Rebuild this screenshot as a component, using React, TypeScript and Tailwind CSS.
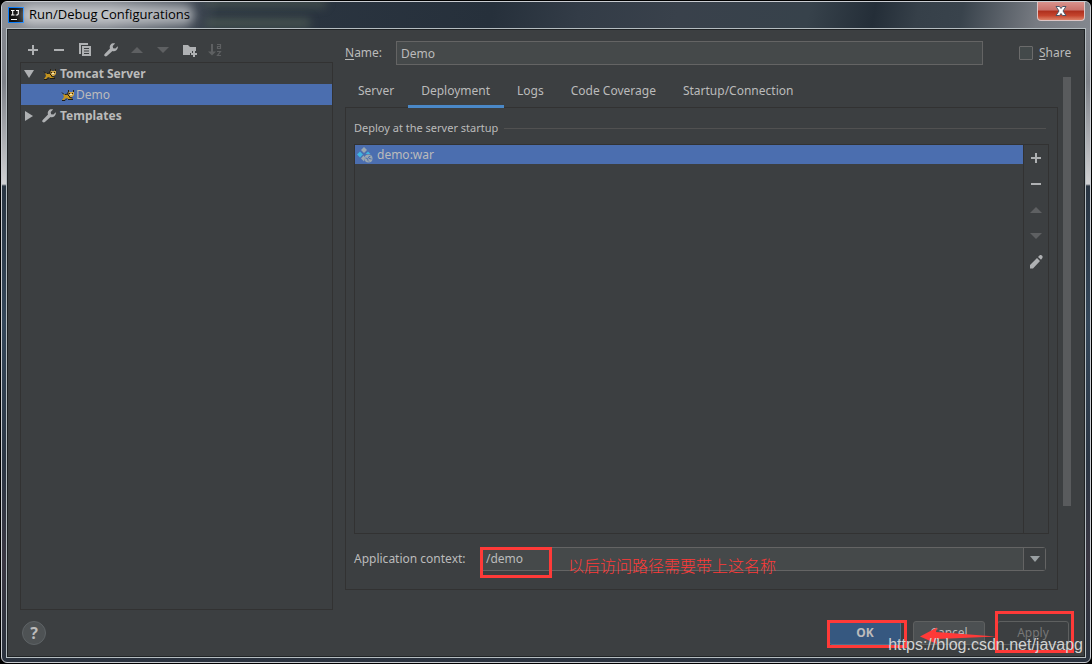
import React, { useState } from 'react';

const tabs = ['Server', 'Deployment', 'Logs', 'Code Coverage', 'Startup/Connection'];

function AddIcon() {
  return (
    <svg className="w-4 h-4" viewBox="0 0 16 16" fill="#afb1b3">
      <path d="M7 3h2v4h4v2H9v4H7V9H3V7h4z" />
    </svg>
  );
}

function RemoveIcon() {
  return (
    <svg className="w-4 h-4" viewBox="0 0 16 16" fill="#afb1b3">
      <path d="M3 7h10v2H3z" />
    </svg>
  );
}

function CopyIcon() {
  return (
    <svg className="w-4 h-4" viewBox="0 0 16 16">
      <path d="M2 1h9v2H4v9H2z" fill="#afb1b3" />
      <path d="M5 4h9v10H5zM7 6v1h5V6zM7 8.5v1h5v-1zM7 11v1h5v-1z" fill="#afb1b3" fillRule="evenodd" />
    </svg>
  );
}

function WrenchIcon() {
  return (
    <svg className="w-4 h-4 shrink-0" viewBox="0 0 16 16" fill="#afb1b3">
      <path d="M14.8 4.200 12.400 6.600 10.100 6.200 9.700 4 12.100 1.600C10.400 1 8.600 1.400 7.600 2.700 6.700 3.800 6.500 5.200 7 6.500L1.700 11.900c-.6.7-.6 1.600 0 2.200s1.600.600 2.200 0l5.600-5.100c1.300.5 2.800.2 3.900-.8 1.200-1.100 1.700-2.600 1.400-4z" />
    </svg>
  );
}

function UpIcon() {
  return (
    <svg className="w-4 h-4" viewBox="0 0 16 16" fill="#5e6062">
      <path d="M8 5l6 6H2z" />
    </svg>
  );
}

function DownIcon() {
  return (
    <svg className="w-4 h-4" viewBox="0 0 16 16" fill="#5e6062">
      <path d="M2 5h12l-6 6z" />
    </svg>
  );
}

function FolderIcon() {
  return (
    <svg className="w-4 h-4" viewBox="0 0 16 16" fill="#afb1b3">
      <path d="M2 3h5l2 2h6v4h-4v2H9v2H2z" />
      <path d="M12 9h2v2h2v2h-2v2h-2v-2h-2v-2h2z" />
    </svg>
  );
}

function SortIcon() {
  return (
    <svg className="w-4 h-4" viewBox="0 0 16 16" fill="none" stroke="#5e6062">
      <path d="M5 2v9" strokeWidth="2" />
      <path d="M1 9.500h8l-4 4z" fill="#5e6062" stroke="none" />
      <path d="M10 2.500h3.500v4h-3v-2h3M10 9.500h3.500l-3 4h3.500" strokeWidth="1.200" />
    </svg>
  );
}

function PencilIcon() {
  return (
    <svg className="w-4 h-4" viewBox="0 0 16 16" fill="#afb1b3">
      <path d="M2 11l7-7 3 3-7 7.500H2zM10 3l1.500-1.500c.7-.7 1.800-.6 2.500.1.800.8.9 1.900.2 2.600L13 5.800z" />
    </svg>
  );
}

function TomcatIcon() {
  return (
    <svg className="w-3.5 h-3.5 shrink-0" viewBox="0 0 14 14">
      <path d="M2 6l3 .5L8 6l1 3 2 1v1H7L5 10l-2 2H1l2-3z" fill="#c4941e" />
      <path d="M7 3l2 1h2l2-1v4l-2 2H9L7 7z" fill="#d0a648" />
      <path d="M1 4.500l2 2M4 6.500l3-.5M1 12.500h3l2-2M7 11.500h5M8.500 9.500l3 .5M7 4v3l2 2" stroke="#1f1b12" fill="none" />
      <path d="M7 2h1v2H7zM12 2h1v2h-1zM8 5h1v1H8zM11 5h1v1h-1z" fill="#2a2110" />
      <path d="M9 6h2v1H9z" fill="#f7ecc8" />
    </svg>
  );
}

function ArtifactIcon() {
  return (
    <svg className="w-4 h-4 shrink-0" viewBox="0 0 16 16">
      <path d="M7 0l3 3-3 3-3-3z" fill="#9aa7b0" />
      <path d="M3 4.500l3 3-3 3-3-3z" fill="#40b6e0" />
      <path d="M11 4.500l2.500 2.500h-5z" fill="#40b6e0" />
      <path d="M6.500 8.500l1.500 2-1 4-3-3z" fill="#9aa7b0" />
      <circle cx="11.500" cy="11.500" r="4" fill="#9aa7b0" />
      <path d="M8.500 11l2 .5.500 2 1 1M13.500 9l-2 1 .5 1.500 2.500.5" stroke="#4b6eaf" fill="none" />
    </svg>
  );
}

function TitleBar() {
  return (
    <header className="relative h-[26px] -mx-1 pl-1.5 flex items-center overflow-hidden bg-[linear-gradient(100deg,#8b8f96_0%,#7d828a_10%,#4a525d_17%,#2c3642_20%,#26303b_45%,#333c47_53%,#39414b_62%,#37424b_74%,#242e38_80%,#364049_84%,#39434c_88%,#777b82_95%,#83878e_100%)] rounded-t-[5px]">
      <span className="absolute left-[204px] -top-1 w-[120px] h-2.5 bg-[#66755f]/35 blur-[4px]" />
      <span className="absolute left-[204px] top-4 w-[104px] h-2.5 bg-[#66755f]/45 blur-[4px]" />
      <svg className="w-4 h-4 shrink-0" viewBox="0 0 16 16">
        <path d="M0 0h16v16H0z" fill="#087cfa" />
        <path d="M1 1h14v14H1z" fill="#111" />
        <path d="M3 3.500h3.500M4.700 3v5M3 8h3.500M8 3.500h3M10.300 3v4l-1 1H7.700" stroke="#fff" fill="none" strokeWidth="1.100" />
        <path d="M3 12h6v1H3z" fill="#fff" />
      </svg>
      <h1 className="relative ml-[5px] text-[13px] text-black font-['Open_Sans',sans-serif]">
        <span className="absolute -left-2 -right-1 -inset-y-px rounded-full bg-white/50 blur-[5px]" />
        <span className="relative">Run/Debug Configurations</span>
      </h1>
      <button
        aria-label="Close"
        className="absolute top-0 right-[5px] w-12 h-[19px] flex items-center justify-center border border-t-0 border-[#dcc5c5] rounded-b-[4px] bg-[linear-gradient(#d9928c_0%,#c9716a_45%,#ae2f1d_50%,#c4442d_75%,#dd8268_100%)]"
      >
        <svg className="w-3 h-3" viewBox="0 0 12 12">
          <path d="M1 1.500h3.500L6 3.500l1.500-2H11L8 6l3 4.500H7.500L6 8.500l-1.500 2H1L4 6z" fill="#fff" stroke="#4d5566" />
        </svg>
      </button>
    </header>
  );
}

function ConfigTree() {
  return (
    <aside className="w-[325px] shrink-0 pl-3 pt-3 flex flex-col">
      <div className="flex gap-2.5 px-[5px] pb-1">
        <button aria-label="Add"><AddIcon /></button>
        <button aria-label="Remove"><RemoveIcon /></button>
        <button aria-label="Copy"><CopyIcon /></button>
        <button aria-label="Edit templates"><WrenchIcon /></button>
        <button aria-label="Move up" disabled><UpIcon /></button>
        <button aria-label="Move down" disabled><DownIcon /></button>
        <button aria-label="New folder"><FolderIcon /></button>
        <button aria-label="Sort" disabled><SortIcon /></button>
      </div>
      <ul className="flex-1 border border-[#323232] leading-[21px]">
        <li className="h-[21px] flex items-center font-bold">
          <svg className="w-4 h-4 shrink-0" viewBox="0 0 16 16" fill="#afb1b3">
            <path d="M3 4h10l-5 8z" />
          </svg>
          <span className="ml-1.5 mr-[3px]"><TomcatIcon /></span>
          Tomcat Server
        </li>
        <li className="h-[21px] flex items-center bg-[#4b6eaf] pl-10">
          <TomcatIcon />
          <span className="ml-px">Demo</span>
        </li>
        <li className="h-[21px] flex items-center font-bold">
          <svg className="w-4 h-4 shrink-0" viewBox="0 0 16 16" fill="#afb1b3">
            <path d="M4 3l8 5-8 5z" />
          </svg>
          <span className="ml-1 mr-[3px]"><WrenchIcon /></span>
          Templates
        </li>
      </ul>
    </aside>
  );
}

function DeploymentPanel() {
  const [context, setContext] = useState('/demo');

  return (
    <div className="flex-1 -mt-px border border-[#323232] pl-2 pr-2 pt-2.5 pb-[18px] flex flex-col">
      <div className="flex items-center gap-1.5 mr-[3px] text-[11px] leading-5">
        <h2>Deploy at the server startup</h2>
        <span className="flex-1 h-px bg-[#515151]" />
      </div>

      <div className="flex-1 mt-1.5 flex border border-[#323232]">
        <ul className="flex-1">
          <li className="h-[19px] flex items-center gap-1 pl-0.5 bg-[#4b6eaf]">
            <ArtifactIcon />
            demo:war
          </li>
        </ul>
        <div className="w-[25px] border-l border-[#323232] pt-[5px] flex flex-col items-center gap-2.5">
          <button aria-label="Add artifact"><AddIcon /></button>
          <button aria-label="Remove artifact"><RemoveIcon /></button>
          <button aria-label="Move artifact up" disabled><UpIcon /></button>
          <button aria-label="Move artifact down" disabled><DownIcon /></button>
          <button aria-label="Edit artifact"><PencilIcon /></button>
        </div>
      </div>

      <div className="mt-[13px] mr-[3px] flex items-center">
        <label htmlFor="context" className="w-[127px]">Application context:</label>
        <div className="relative flex-1 h-6 flex border border-[#646464] rounded-r-[3px] bg-[#45494a]">
          <input
            id="context"
            value={context}
            onChange={(e) => setContext(e.target.value)}
            className="flex-1 min-w-0 pl-1 bg-transparent outline-none"
          />
          <button aria-label="Show contexts" className="w-[22px] border-l border-[#646464] bg-[#3c3f41] flex items-center justify-center">
            <svg className="w-2.5 h-1.5" viewBox="0 0 10 6" fill="#9aa0a3">
              <path d="M0 0h10L5 6z" />
            </svg>
          </button>
          <span className="absolute -left-0.5 -top-px w-[72px] h-[31px] border-[3px] border-[#ff3a38] pointer-events-none" />
          <span className="absolute left-[86px] top-[7px] text-base leading-5 font-light text-[#ff3a38] font-['Noto_Sans_CJK_SC',sans-serif] pointer-events-none">
            以后访问路径需要带上这名称
          </span>
        </div>
      </div>
    </div>
  );
}

function Footer() {
  return (
    <footer className="relative flex items-center gap-3 pl-3.5 pr-[15px] py-[11px]">
      <button
        aria-label="Help"
        className="w-6 h-6 mr-auto rounded-full border border-[#5e6366] bg-[#4e5254] text-base leading-5 font-bold text-[#bbbbbb]"
      >
        ?
      </button>
      <div className="relative">
        <button className="w-[72px] h-6 bg-[#365880] border border-[#4c708c] rounded-[3px] font-bold leading-[22px]">OK</button>
        <span className="absolute -left-0.5 -top-px w-20 h-7 border-[3px] border-[#ff3a38] pointer-events-none" />
      </div>
      <div className="relative">
        <button className="w-[72px] h-6 bg-[#4c5052] border border-[#5e6060] rounded-[3px] leading-[22px]">Cancel</button>
        <svg className="absolute left-[7px] top-1.5 w-[76px] h-[18px] z-10 pointer-events-none" viewBox="0 0 76 18">
          <path d="M0 9.500L17 0.500 16 5 30 6 76 9.500 30 11.500 16 12 17 17z" fill="#ff3a38" />
        </svg>
      </div>
      <div className="relative">
        <button disabled className="w-[72px] h-6 border border-[#5e6060] rounded-[3px] leading-[22px] text-[#777777]">Apply</button>
        <span className="absolute -left-0.5 -top-2.5 w-[79px] h-[42px] border-[3px] border-[#ff3a38] pointer-events-none" />
      </div>
      <span className="absolute right-px bottom-px z-20 text-base leading-5 text-[#d2d3d3] font-['Liberation_Sans',Arial,sans-serif] pointer-events-none">
        https://blog.csdn.net/javapg
      </span>
    </footer>
  );
}

export default function App() {
  const [name, setName] = useState('Demo');

  return (
    <div className="min-h-screen flex bg-black p-px font-['Noto_Sans',sans-serif] text-xs text-[#bbbbbb]">
      <div className="flex-1 flex flex-col border border-[#c9ccd1] rounded-[6px] px-1 pb-1 bg-[linear-gradient(#868a91_0px,#7d8188_80px,#d0d1d3_182px,#293542_184px,#34475a_320px,#2b3644_460px,#3a3742_560px,#2a323e_100%)]">
        <TitleBar />
        <div className="flex-1 flex flex-col border border-[#b4bcc0]">
          <div className="flex-1 flex flex-col border border-[#1f2224] bg-[#3c3f41]">
            <main className="flex-1 flex">
              <ConfigTree />
              <section className="flex-1 pl-3 pt-[11px] pb-5 flex flex-col">
                <div className="flex items-center pr-3">
                  <label htmlFor="name" className="w-[51px]"><u className="underline-offset-2">N</u>ame:</label>
                  <input
                    id="name"
                    value={name}
                    onChange={(e) => setName(e.target.value)}
                    className="flex-1 h-6 px-1 border border-[#646464] bg-[#45494a] outline-none"
                  />
                  <label className="ml-9 w-[53px] flex items-center gap-1.5">
                    <input type="checkbox" className="appearance-none w-3.5 h-3.5 shrink-0 border border-[#6b6b6b] rounded-[1px] bg-[#43494a]" />
                    <span><u className="underline-offset-2">S</u>hare</span>
                  </label>
                </div>

                <div className="flex-1 mt-[9px] flex pr-[13px]">
                  <div className="flex-1 flex flex-col">
                    <nav className="relative z-10 flex h-[34px]">
                      {tabs.map((tab) => (
                        <button
                          key={tab}
                          className={
                            tab === 'Deployment'
                              ? 'pl-[13px] pr-3.5 pt-[3px] border-b-[3px] border-[#4a88c7]'
                              : 'pl-[13px] pr-3.5'
                          }
                        >
                          {tab}
                        </button>
                      ))}
                    </nav>
                    <DeploymentPanel />
                  </div>
                  <div className="ml-[5px] mt-[3px] w-2 h-[429px] bg-[#595b5d]" />
                </div>
              </section>
            </main>
            <Footer />
          </div>
        </div>
      </div>
    </div>
  );
}
